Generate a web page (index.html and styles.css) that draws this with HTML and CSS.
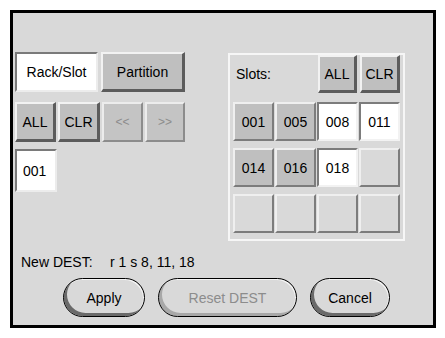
FILE: index.html
```html
<!DOCTYPE html>
<html>
<head>
<meta charset="utf-8">
<link rel="stylesheet" href="styles.css">
</head>
<body>
<div class="frame">
  <div class="top">
    <div class="left">
      <div class="row r1">
        <div class="btn sunken white w83">Rack/Slot</div>
        <div class="btn raised w84">Partition</div>
      </div>
      <div class="row r2">
        <div class="btn raised w41">ALL</div>
        <div class="btn raised w42">CLR</div>
        <div class="btn disabled w41">&lt;&lt;</div>
        <div class="btn disabled w40">&gt;&gt;</div>
      </div>
      <div class="row r3">
        <div class="btn sunken white box001">001</div>
      </div>
    </div>
    <div class="panel">
      <div class="phead">
        <span class="slots">Slots:</span>
        <div class="btn raised pall">ALL</div>
        <div class="btn raised pclr">CLR</div>
      </div>
      <div class="grid">
        <div class="cell on">001</div>
        <div class="cell on">005</div>
        <div class="cell sel">008</div>
        <div class="cell sel">011</div>
        <div class="cell on">014</div>
        <div class="cell on">016</div>
        <div class="cell sel">018</div>
        <div class="cell"></div>
        <div class="cell"></div>
        <div class="cell"></div>
        <div class="cell"></div>
        <div class="cell"></div>
      </div>
    </div>
  </div>
  <div class="dest">
    <span class="dlabel">New DEST:</span>
    <span class="dval">r 1 s 8, 11, 18</span>
  </div>
  <div class="actions">
    <div class="pill apply">Apply</div>
    <div class="pill reset">Reset DEST</div>
    <div class="pill cancel">Cancel</div>
  </div>
</div>
</body>
</html>
```
FILE: styles.css
```css
html, body {
  margin: 0;
  padding: 0;
  background: #ffffff;
}
body {
  font-family: "Liberation Sans", Arial, sans-serif;
  font-size: 14px;
  color: #000;
}
.frame {
  box-sizing: border-box;
  margin: 10px 0 0 10px;
  width: 426px;
  height: 318px;
  border: 3px solid #000;
  background: #d9d9d9;
  display: flex;
  flex-direction: column;
}
.top {
  box-sizing: border-box;
  display: flex;
  padding-top: 39px;
  height: 228px;
}
.left {
  margin-left: 2px;
  width: 172px;
  display: flex;
  flex-direction: column;
}
.row {
  display: flex;
  gap: 3px;
}
.r1 { height: 40px; }
.r2 { height: 40px; margin-top: 10px; gap: 2px; }
.r3 { margin-top: 7px; }
.btn {
  box-sizing: border-box;
  display: flex;
  align-items: center;
  justify-content: center;
  height: 40px;
  border-style: solid;
  border-width: 2px 3px 3px 2px;
}
.raised {
  background: #bfbfbf;
  border-color: #f2f2f2 #5c5c5c #5c5c5c #f2f2f2;
}
.sunken {
  border-width: 2px 2px 2px 2px;
  border-color: #7a7a7a #ececec #ececec #7a7a7a;
}
.white { background: #ffffff; }
.disabled {
  background: #c4c4c4;
  color: #8c8c8c;
  border-width: 2px 2px 2px 2px;
  border-color: #ececec #8c8c8c #8c8c8c #ececec;
  font-size: 12px;
}
.w83 { width: 83px; }
.w84 { width: 84px; }
.w41 { width: 41px; }
.w42 { width: 42px; }
.w40 { width: 40px; }
.box001 {
  width: 42px;
  height: 43px;
  justify-content: flex-start;
  padding-left: 6px;
}
.panel {
  box-sizing: border-box;
  margin-left: 41px;
  margin-top: 1px;
  width: 177px;
  height: 188px;
  border: 2px solid #f6f6f6;
  padding: 0 3px 0 3px;
}
.phead {
  display: flex;
  align-items: center;
  height: 38px;
}
.slots {
  margin-left: 3px;
  flex: 1;
}
.pall { width: 39px; height: 38px; }
.pclr { width: 40px; height: 38px; margin-left: 3px; }
.grid {
  margin-top: 9px;
  display: grid;
  grid-template-columns: repeat(4, 41px);
  grid-auto-rows: 39px;
  column-gap: 1px;
  row-gap: 7px;
}
.cell {
  box-sizing: border-box;
  display: flex;
  align-items: center;
  justify-content: center;
  border-style: solid;
  border-width: 2px 2px 2px 2px;
  border-color: #efefef #7c7c7c #7c7c7c #efefef;
  background: #d9d9d9;
}
.cell.on {
  background: #bfbfbf;
}
.cell.sel {
  background: #ffffff;
  border-color: #7c7c7c #f2f2f2 #f2f2f2 #7c7c7c;
}
.dest {
  margin-top: 11px;
  height: 20px;
  display: flex;
  align-items: center;
  padding-left: 8px;
}
.dlabel { width: 89px; }
.actions {
  margin-top: 6px;
  display: flex;
  gap: 13px;
  padding-left: 50px;
}
.pill {
  box-sizing: border-box;
  height: 39px;
  border: 1px solid #000;
  border-radius: 20px;
  display: flex;
  align-items: center;
  justify-content: center;
  background: #d9d9d9;
  box-shadow: inset 3px -3px 0 #6a6a6a, inset -1px 1px 0 #f4f4f4;
}
.apply { width: 82px; }
.reset {
  width: 139px;
  color: #8c8c8c;
  box-shadow: inset 3px -3px 0 #a8a8a8, inset -1px 1px 0 #f4f4f4;
}
.cancel { width: 80px; }
```
